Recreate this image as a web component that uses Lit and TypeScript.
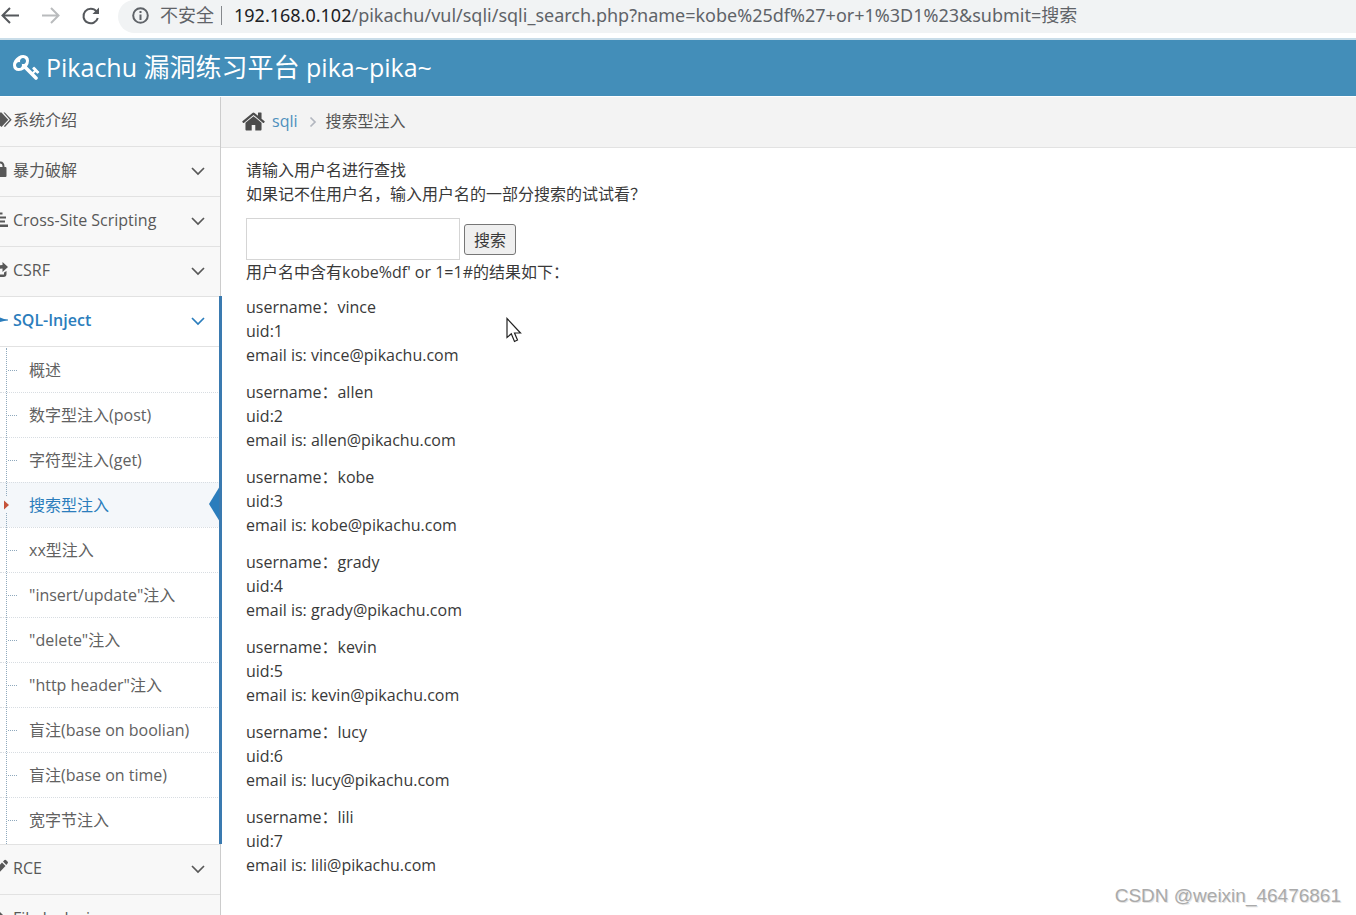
import { LitElement, html, css, svg } from "lit";
import { customElement, state } from "lit/decorators.js";
import { classMap } from "lit/directives/class-map.js";

const KEY =
  "M832 512q0-80-56-136t-136-56-136 56-56 136q0 42 19 83-41-19-83-19-80 0-136 56t-56 136 56 136 136 56 136-56 56-136q0-42-19-83 41 19 83 19 80 0 136-56t56-136zm851 704q0 17-49 66t-66 49q-9 0-28.5-16t-36.5-33-38.5-40-24.5-26l-96 96 220 220q28 28 28 68 0 42-39 81t-81 39q-40 0-68-28l-671-671q-176 131-365 131-163 0-265.5-102.5t-102.5-265.5q0-160 95-313t248-248 313-95q163 0 265.5 102.5t102.5 265.5q0 189-131 365l355 355 96-96q-3-3-26-24.5t-40-38.5-33-36.5-16-28.5q0-17 49-66t66-49q13 0 23 10 6 6 46 44.5t82 79.5 86.5 86 73 78 28.5 41z";
const HOME =
  "M1472 992v480q0 26-19 45t-45 19h-384v-384h-256v384h-384q-26 0-45-19t-19-45v-480q0-1 .5-3t.5-3l575-474 575 474q1 2 1 6zm223-69l-62 74q-8 9-21 11h-3q-13 0-21-7l-692-577-692 577q-12 8-24 7-13-2-21-11l-62-74q-8-10-7-23.5t11-21.5l719-599q32-26 76-26t76 26l244 204v-195q0-14 9-23t23-9h192q14 0 23 9t9 23v408l219 182q10 8 11 21.5t-7 23.5z";

// The left part of every menu glyph runs off the window edge.
const GLYPHS = {
  tags: svg`<path d="M-6 2.500H1.500L8.300 9.700L1.500 17L-9 9Z"/><path d="M3.500 2.500H4.800L11.700 9.700L5 17L3.800 16.300L9.800 9.700Z"/>`,
  lock: svg`<path fill-rule="evenodd" d="M-5 7H-3V6Q-3 1.500 0.500 1.500Q4.500 1.500 4.500 7H5.500Q6.500 7 6.500 8V16Q6.500 17 5.500 17H-5ZM-1 7H2.500V6Q2.500 3.500 0.500 3.500Q-1 3.500-1 6Z"/>`,
  align: svg`<path d="M-4 2.500H2.500V4.500H-4ZM-4 6.500H6V8.500H-4ZM-4 10.500H5V12.500H-4ZM-4 14.500H8V17H-4Z"/>`,
  share: svg`<path d="M-4 9Q-3 5 2.500 5V2L8 7L2.500 12V8.500Q-1 8.500-4 11Z"/><path d="M-4 14.500H4V12.500L6.500 11V14Q6.500 17 3.500 17H-4Z"/>`,
  plane: svg`<path d="M-6 5L0 7.500Q4 9.300 8 9.500V10.500Q4 10.700 0 12L-6 15Z"/>`,
  pencil: svg`<path d="M-6 13L2 4.500L5.500 8L-3 17ZM3 3.500L4.500 2Q5.500 1.500 6.200 2.200L7.700 3.700Q8.300 4.500 7.500 5.500L6.300 7Z"/>`,
  file: svg`<path d="M-6 2L0 4L5.500 9.500L0 16L-6 17Z"/>`,
};

interface MenuItem {
  label: string;
  glyph: keyof typeof GLYPHS;
  plain?: boolean;
  children?: string[];
}

const MENU: MenuItem[] = [
  { label: "系统介绍", glyph: "tags", plain: true },
  { label: "暴力破解", glyph: "lock" },
  { label: "Cross-Site Scripting", glyph: "align" },
  { label: "CSRF", glyph: "share" },
  {
    label: "SQL-Inject",
    glyph: "plane",
    children: [
      "概述",
      "数字型注入(post)",
      "字符型注入(get)",
      "搜索型注入",
      "xx型注入",
      '"insert/update"注入',
      '"delete"注入',
      '"http header"注入',
      "盲注(base on boolian)",
      "盲注(base on time)",
      "宽字节注入",
    ],
  },
  { label: "RCE", glyph: "pencil" },
  { label: "File Inclusion", glyph: "file" },
];

@customElement("browser-bar")
class BrowserBar extends LitElement {
  static styles = css`
    :host {
      display: flex;
      align-items: flex-start;
      flex: none;
      height: 38px;
      background: #fff;
      border-bottom: 2px solid #c9dde9;
      color: #5f6368;
      font: 18px/30px "Noto Sans", "Noto Sans CJK SC", sans-serif;
    }
    button {
      flex: none;
      width: 40px;
      height: 32px;
      padding: 0;
      border: 0;
      background: none;
      color: #55585c;
    }
    button:disabled {
      color: #b9bbbd;
    }
    svg {
      display: block;
      width: 20px;
      height: 32px;
      fill: none;
      stroke: currentColor;
      stroke-width: 2;
    }
    .address {
      display: flex;
      flex: 1;
      min-width: 0;
      height: 33px;
      margin-left: -2px;
      padding-left: 13px;
      border-radius: 17px 0 0 17px;
      background: #f1f3f4;
      white-space: nowrap;
    }
    .info {
      margin-right: 9px;
    }
    .insecure {
      margin-right: 7px;
    }
    .divider {
      width: 1px;
      height: 19px;
      margin: 6px 12px 0 0;
      background: #85888c;
    }
    .host {
      color: #202124;
    }
  `;
  render() {
    return html`
      <button aria-label="后退">
        <svg viewBox="0 0 20 32"><path d="M19 15.500H3M10 8L2.500 15.500L10 23" /></svg>
      </button>
      <button aria-label="前进" disabled>
        <svg viewBox="0 0 20 32"><path d="M2 15.500H18M11 8L18.500 15.500L11 23" /></svg>
      </button>
      <button aria-label="刷新">
        <svg viewBox="0 0 20 32">
          <path d="M16.500 11.500A7.300 7.300 0 1 0 17.800 18" />
          <path d="M19 7.500V14H12.500Z" fill="currentColor" stroke="none" />
        </svg>
      </button>
      <div class="address">
        <svg class="info" viewBox="0 0 20 32">
          <circle cx="9.500" cy="15.500" r="7.300" /><path d="M9.500 14.500V20M9.500 11V13" />
        </svg>
        <span class="insecure">不安全</span><span class="divider"></span>
        <span class="host">192.168.0.102</span
        ><span>/pikachu/vul/sqli/sqli_search.php?name=kobe%25df%27+or+1%3D1%23&amp;submit=搜索</span>
      </div>
    `;
  }
}

@customElement("side-menu")
class SideMenu extends LitElement {
  static styles = css`
    :host {
      display: block;
      box-sizing: border-box;
      width: 221px;
      background: #f8f8f8;
      border-right: 1px solid #ccc;
    }
    ul {
      list-style: none;
      margin: 0;
      padding: 0;
    }
    a {
      color: inherit;
      text-decoration: none;
    }
    .item {
      position: relative;
      color: #585858;
    }
    .link {
      display: flex;
      align-items: center;
      box-sizing: border-box;
      height: 50px;
      padding: 0 15px 4px 0;
      border-bottom: 1px solid #e2e2e2;
    }
    .glyph {
      flex: none;
      width: 13px;
      height: 20px;
      fill: currentColor;
    }
    .label {
      flex: 1;
      white-space: nowrap;
    }
    .chevron {
      width: 14px;
      height: 10px;
      margin-top: 2px;
      fill: none;
      stroke: currentColor;
      stroke-width: 1.700;
    }
    .open {
      background: #fff;
    }
    .open::after {
      content: "";
      position: absolute;
      top: -1px;
      bottom: 1px;
      right: -2px;
      width: 3px;
      background: #3a7ab0;
    }
    .open > .link {
      color: #2b7dbc;
      font-weight: 600;
    }
    .sub {
      position: relative;
      padding-bottom: 2px;
      border-bottom: 1px solid #e2e2e2;
    }
    .sub::before {
      content: "";
      position: absolute;
      z-index: 1;
      top: 1px;
      bottom: 0;
      left: 6px;
      border-left: 1px dotted #8fa9bd;
    }
    .entry {
      position: relative;
      display: flex;
      align-items: center;
      box-sizing: border-box;
      height: 45px;
      border-top: 1px dotted #d8dde2;
      color: #616161;
    }
    .entry:first-child {
      border-top-color: transparent;
    }
    .entry::before {
      content: "";
      width: 9px;
      margin: 0 12px 0 8px;
      border-top: 1px dotted #8fa9bd;
    }
    .current {
      color: #2b7dbc;
      background: #f4f7fa;
    }
    .current::before {
      border-color: transparent;
    }
    .caret {
      position: absolute;
      z-index: 2;
      left: 3px;
      top: 14px;
      width: 7px;
      height: 16px;
      background: #f4f7fa;
      fill: #c5533a;
    }
    .pointer {
      position: absolute;
      right: 0;
      top: 3px;
      width: 11px;
      height: 36px;
      fill: #2b7dbc;
    }
  `;
  @state() private current = "搜索型注入";

  private entry(name: string) {
    const on = name === this.current;
    return html`<li class=${classMap({ entry: true, current: on })}>
      ${on
        ? html`<svg class="caret" viewBox="0 0 7 16"><path d="M1 3.500L6 8L1 12.500Z" /></svg>
            <svg class="pointer" viewBox="0 0 11 36"><path d="M11 0V36L0 18Z" /></svg>`
        : ""}
      <a href="#">${name}</a>
    </li>`;
  }

  render() {
    return html`<nav>
      <ul>
        ${MENU.map(
          (m) => html`<li class=${classMap({ item: true, open: !!m.children })}>
            <a class="link" href="#">
              <svg class="glyph" viewBox="0 0 13 20">${GLYPHS[m.glyph]}</svg>
              <span class="label">${m.label}</span>
              ${m.plain
                ? ""
                : html`<svg class="chevron" viewBox="0 0 14 10"><path d="M1 2L7 8L13 2" /></svg>`}
            </a>
            ${m.children
              ? html`<ul class="sub">${m.children.map((c) => this.entry(c))}</ul>`
              : ""}
          </li>`
        )}
      </ul>
    </nav>`;
  }
}

@customElement("app-root")
class AppRoot extends LitElement {
  static styles = css`
    :host {
      position: relative;
      display: flex;
      flex-direction: column;
      height: 100vh;
      overflow: hidden;
      background: #fff;
      color: #393939;
      font: 16px/24px "Open Sans", "Noto Sans CJK SC", sans-serif;
    }
    .brand {
      display: flex;
      align-items: center;
      box-sizing: border-box;
      flex: none;
      gap: 5px;
      height: 56px;
      padding: 0 0 2px 13px;
      margin: 0;
      background: #438eb9;
      color: #fff;
      font-size: 25px;
      font-weight: 400;
    }
    .han {
      font-size: 26px;
    }
    .key {
      width: 28px;
      height: 28px;
      fill: #fff;
    }
    .body {
      display: flex;
      flex: 1;
      align-items: flex-start;
      padding-top: 1px;
      background: #fff;
      min-height: 0;
    }
    main {
      flex: 1;
      min-width: 0;
    }
    .crumbs {
      display: flex;
      align-items: center;
      box-sizing: border-box;
      height: 51px;
      padding: 0 0 2px 20px;
      background: #f3f3f3;
      border-bottom: 1px solid #e2e2e2;
      color: #555;
    }
    .home {
      width: 25px;
      height: 25px;
      margin-right: 6px;
      fill: #4c4c4c;
    }
    .crumbs a {
      color: #4c8fbd;
      text-decoration: none;
    }
    .sep {
      width: 8px;
      height: 12px;
      margin: 2px 9px 0 11px;
      fill: none;
      stroke: #b2b6bf;
      stroke-width: 1.700;
    }
    .content {
      padding: 10px 25px;
    }
    p {
      margin: 0 0 12px;
    }
    .summary {
      margin-bottom: 11px;
    }
    .user {
      margin-bottom: 13px;
    }
    .search {
      display: flex;
      align-items: center;
      gap: 4px;
    }
    input {
      box-sizing: border-box;
      width: 214px;
      height: 42px;
      padding: 5px;
      border: 1px solid #d5d5d5;
      font: inherit;
    }
    .go {
      height: 31px;
      padding: 1px 9px 0;
      border: 1px solid #767676;
      border-radius: 3px;
      background: #efefef;
      color: #393939;
      font: inherit;
    }
    .cursor {
      position: absolute;
      left: 506px;
      top: 317px;
      width: 16px;
      height: 26px;
      fill: #fff;
      stroke: #222;
      stroke-width: 1.200;
    }
    .watermark {
      position: absolute;
      right: 15px;
      bottom: 7px;
      color: #aaa;
      font: 19px/24px "Liberation Sans", sans-serif;
      text-shadow: 1px 1px 0 #e4e4e4;
    }
  `;
  private users = ["vince", "allen", "kobe", "grady", "kevin", "lucy", "lili"];

  render() {
    return html`
      <browser-bar></browser-bar>
      <h1 class="brand">
        <svg class="key" viewBox="0 0 1792 1792"><path d=${KEY} /></svg>
        <span>Pikachu <span class="han">漏洞练习平台</span> pika~pika~</span>
      </h1>
      <div class="body">
        <side-menu></side-menu>
        <main>
          <nav class="crumbs">
            <svg class="home" viewBox="0 0 1792 1792"><path d=${HOME} /></svg>
            <a href="#">sqli</a>
            <svg class="sep" viewBox="0 0 8 12"><path d="M1.500 1.500L6 6L1.500 10.500" /></svg>
            <span>搜索型注入</span>
          </nav>
          <div class="content">
            <p>
              <label for="name">请输入用户名进行查找<br />如果记不住用户名，输入用户名的一部分搜索的试试看？</label>
            </p>
            <form class="search" @submit=${(e: Event) => e.preventDefault()}>
              <input id="name" type="text" name="name" />
              <button class="go" type="submit">搜索</button>
            </form>
            <p class="summary">用户名中含有kobe%df' or 1=1#的结果如下：</p>
            ${this.users.map(
              (u, i) =>
                html`<p class="user">username：${u}<br />uid:${i + 1}<br />email is: ${u}@pikachu.com</p>`
            )}
          </div>
        </main>
      </div>
      <svg class="cursor" viewBox="0 0 16 26">
        <path d="M1 1.500V20.500L5.300 16.800L8.500 24.500L11.500 23L8.500 16H14.500Z" />
      </svg>
      <div class="watermark">CSDN @weixin_46476861</div>
    `;
  }
}
